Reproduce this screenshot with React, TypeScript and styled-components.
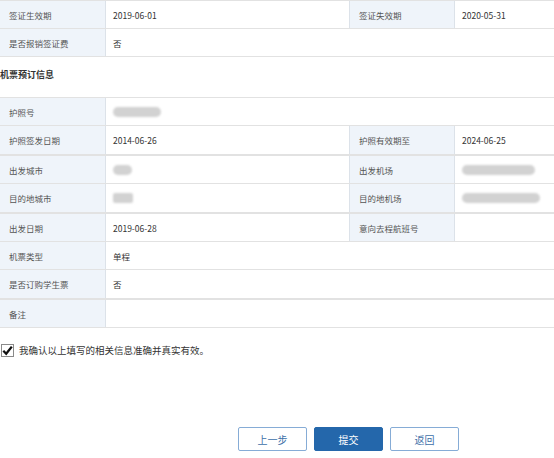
import React from "react";
import styled, { createGlobalStyle } from "styled-components";

const Global = createGlobalStyle`
  html, body { margin: 0; padding: 0; background: #fff; }
  body { font-family: "Noto Sans CJK SC", "Noto Sans", sans-serif; font-size: 12px; color: #333; }
  * { box-sizing: border-box; }
`;

const Page = styled.div`
  width: 554px;
  height: 458px;
  overflow: hidden;
  display: flex;
  flex-direction: column;
`;

const Table = styled.div`
  display: flex;
  flex-direction: column;
  border-top: 1px solid #e2e2e2;
`;

const Row = styled.div<{ $thick?: boolean }>`
  display: grid;
  grid-template-columns: 106px 243px 106px 1fr;
  height: ${(p) => (p.$thick ? 30 : 28)}px;
  border-bottom: ${(p) => (p.$thick ? 2 : 1)}px solid #e2e2e2;
`;

const Label = styled.div<{ $right?: boolean }>`
  display: flex;
  align-items: center;
  padding-left: 9px;
  background: #eff4fa;
  color: #555;
  font-size: 8.5px;
  border-right: 1px solid #dce2e9;
  ${(p) => (p.$right ? "border-left: 1px solid #dce2e9;" : "")}
  white-space: nowrap;
`;

const Value = styled.div<{ $span?: boolean }>`
  display: flex;
  align-items: center;
  padding-left: 7px;
  color: #333;
  font-size: 8.5px;
  ${(p) => (p.$span ? "grid-column: 2 / 5;" : "")}
  white-space: nowrap;
`;

const Blur = styled.span<{ $w: number; $round?: boolean }>`
  display: inline-block;
  width: ${(p) => p.$w}px;
  height: 10px;
  background: #d2d2d2;
  border-radius: ${(p) => (p.$round ? "5px" : "2px")};
  filter: blur(1.2px);
`;

const Title = styled.div`
  margin: 9px 0 13px 0;
  line-height: 18px;
  font-weight: bold;
  font-size: 9px;
  color: #333;
`;

const Confirm = styled.label`
  display: flex;
  align-items: center;
  gap: 5px;
  margin-top: 14px;
  padding-left: 1px;
  height: 16px;
  font-size: 9.5px;
  color: #333;
`;

const Buttons = styled.div`
  display: flex;
  gap: 7px;
  margin-top: 69px;
  padding-left: 238px;
`;

const Btn = styled.button<{ $primary?: boolean }>`
  width: 69px;
  height: 24px;
  border-radius: 2px;
  font-family: "Noto Sans CJK SC", sans-serif;
  font-size: 10px;
  cursor: pointer;
  border: 1px solid ${(p) => (p.$primary ? "#2467ab" : "#86acd6")};
  background: ${(p) => (p.$primary ? "#2467ab" : "#fff")};
  color: ${(p) => (p.$primary ? "#fff" : "#3d6fa8")};
  padding: 0;
`;

const CheckBox = () => (
  <svg width="13" height="13" viewBox="0 0 13 13">
    <rect x="0.5" y="0.5" width="12" height="12" fill="#fff" stroke="#8a8a8a" />
    <path d="M2.3 6.8 L5.2 9.8 L10.8 2.6" fill="none" stroke="#111" strokeWidth="2.3" />
  </svg>
);

export default function App() {
  return (
    <Page>
      <Global />
      <Table>
        <Row>
          <Label>签证生效期</Label>
          <Value>2019-06-01</Value>
          <Label $right>签证失效期</Label>
          <Value>2020-05-31</Value>
        </Row>
        <Row>
          <Label>是否报销签证费</Label>
          <Value $span>否</Value>
        </Row>
      </Table>
      <Title>机票预订信息</Title>
      <Table>
        <Row>
          <Label>护照号</Label>
          <Value $span>
            <Blur $w={48} $round />
          </Value>
        </Row>
        <Row $thick>
          <Label>护照签发日期</Label>
          <Value>2014-06-26</Value>
          <Label $right>护照有效期至</Label>
          <Value>2024-06-25</Value>
        </Row>
        <Row>
          <Label>出发城市</Label>
          <Value>
            <Blur $w={19} $round />
          </Value>
          <Label $right>出发机场</Label>
          <Value>
            <Blur $w={73} $round />
          </Value>
        </Row>
        <Row $thick>
          <Label>目的地城市</Label>
          <Value>
            <Blur $w={20} />
          </Value>
          <Label $right>目的地机场</Label>
          <Value>
            <Blur $w={78} $round />
          </Value>
        </Row>
        <Row>
          <Label>出发日期</Label>
          <Value>2019-06-28</Value>
          <Label $right>意向去程航班号</Label>
          <Value></Value>
        </Row>
        <Row>
          <Label>机票类型</Label>
          <Value $span>单程</Value>
        </Row>
        <Row $thick>
          <Label>是否订购学生票</Label>
          <Value $span>否</Value>
        </Row>
        <Row>
          <Label>备注</Label>
          <Value $span></Value>
        </Row>
      </Table>
      <Confirm>
        <CheckBox />
        我确认以上填写的相关信息准确并真实有效。
      </Confirm>
      <Buttons>
        <Btn>上一步</Btn>
        <Btn $primary>提交</Btn>
        <Btn>返回</Btn>
      </Buttons>
    </Page>
  );
}
